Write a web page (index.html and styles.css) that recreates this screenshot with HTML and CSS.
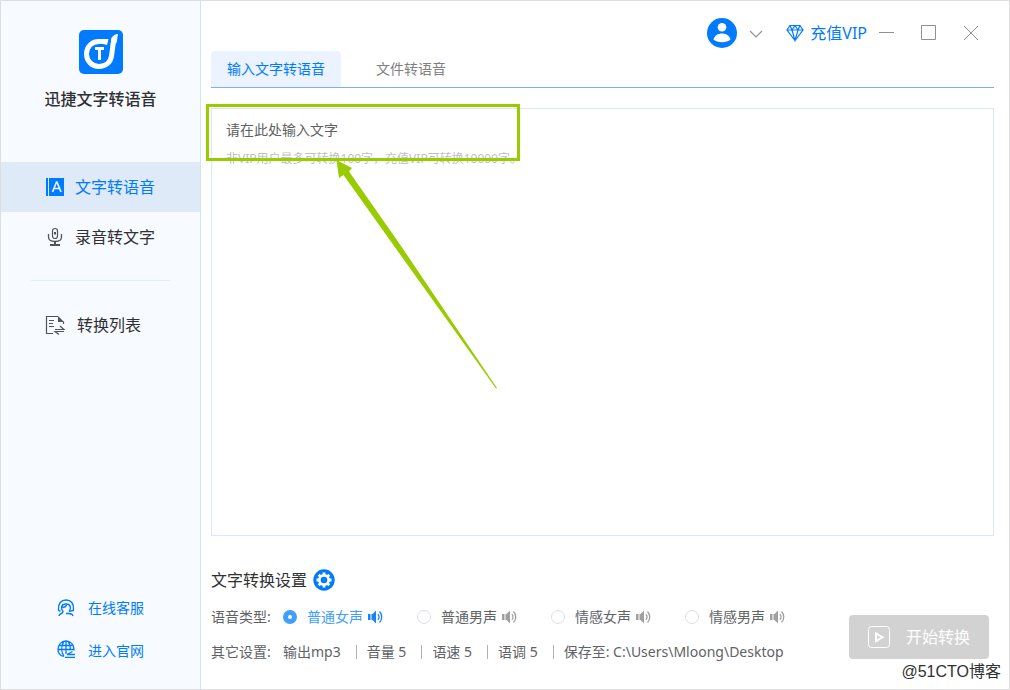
FILE: index.html
```html
<!DOCTYPE html>
<html lang="zh-CN">
<head>
<meta charset="utf-8">
<meta name="viewport" content="width=device-width, initial-scale=1">
<title>迅捷文字转语音</title>
<link rel="stylesheet" href="styles.css">
</head>
<body>
<svg class="symbols" aria-hidden="true">
  <symbol id="speaker" viewBox="0 0 15 14">
    <path d="M0 4h2.500v6H0zM3.500 4h1L8 .5v13L4.500 10h-1z" fill="currentColor"/>
    <path d="M9.800 4.200c1.700 1.600 1.700 4 0 5.600M11.500 1.500c3 3 3 8 0 11" fill="none" stroke="currentColor" stroke-width="1.300"/>
  </symbol>
</svg>
<div class="app">
  <aside class="sidebar">
    <div class="brand">
      <svg class="logo" viewBox="0 0 44 44" aria-hidden="true">
        <rect width="44" height="44" rx="5" fill="#007aff"/>
        <path d="M28 11.500H20C12.500 11.500 7.500 17 7.500 24c0 7 5.500 12.500 12.500 12.500 6.500 0 11.500-4 12.500-10.500L35 8" fill="none" stroke="#fff" stroke-width="5"/>
        <path d="M32.200 10.500Q32.500 4.500 39 4L37.500 13 31.500 16zM29.500 9l-1.500 6-4-1V9z" fill="#fff"/>
        <path d="M16 17h9v3h-3v10h-3V20h-3z" fill="#fff"/>
      </svg>
      <h1>迅捷文字转语音</h1>
    </div>
    <nav class="nav">
      <a class="nav-item active" href="#speech">
        <svg width="20" height="20" viewBox="0 0 20 20" aria-hidden="true"><path d="M1 1h2v18H1zM4 1h15v18H4z" fill="#007aff"/><path d="M7.500 15l4-10h.5l4 10M9 11.500h5.500" fill="none" stroke="#e6f1ff" stroke-width="1.700"/></svg>
        <span>文字转语音</span>
      </a>
      <a class="nav-item" href="#record">
        <svg width="20" height="20" viewBox="0 0 20 20" fill="none" stroke="#505357" aria-hidden="true"><rect x="7.500" y="1.500" width="5" height="10" rx="2.500" stroke-width="1.200"/><path d="M3.500 7v3c0 3 2.500 4.500 6.500 4.500s6.500-1.500 6.500-4.500V7" stroke-width="1.300"/><path d="M10 5v2.500M10 14.500V18M5 18h10" stroke-width="2"/></svg>
        <span>录音转文字</span>
      </a>
      <hr>
      <a class="nav-item list" href="#list">
        <svg width="20" height="20" viewBox="0 0 20 20" fill="none" stroke="#505357" stroke-width="1.200" aria-hidden="true"><path d="M8 18.500H1.500v-17H13M18.500 6.500V9M4 5.500h5M4 8.500h4M4 11.500h5M10 14.500h9l-4-3.500M19 16.500h-9l4 3"/><path d="M13 1l6 6h-6z" fill="#505357" stroke="none"/></svg>
        <span>转换列表</span>
      </a>
    </nav>
    <div class="links">
      <a href="#service">
        <svg width="18" height="18" viewBox="0 0 18 18" fill="none" stroke="#007aff" stroke-width="1.400" aria-hidden="true"><path d="M1.500 10.500C1 4.500 4 1 9 1s8 3.500 7.500 9.500c0 1-1 1.500-2.500 1.500h-2M1.500 10.500c0 1 .5 1.500 2 1.500"/><path d="M6 12.500C3.500 10 4 5 9 5s5.500 5 3 7.500M5.500 8.500c2 0 3.500-1 4-2.500M6 12c0 2-1 2.500-2.500 3-1 .5-1.500 1-1.500 2M9 14.500h2.500c3 0 4 .5 4.500 2.500"/></svg>
        <span>在线客服</span>
      </a>
      <a class="website" href="#website">
        <svg width="18" height="18" viewBox="0 0 18 18" fill="none" stroke="#007aff" stroke-width="1.300" aria-hidden="true"><path d="M6.500 16.500C3 15.500 1 13 1 9.500 1 4.500 4.500 1 9 1s8 3.500 8 8.500v1M1 9.500h16M2.500 5.500h13M9 1v13M7 1.500c-3 4-3 10 0 15M11 1.500c2 2.500 2.500 6 2 9M18 17.300H8M18 14.500h-8l5.500-3"/></svg>
        <span>进入官网</span>
      </a>
    </div>
  </aside>
  <main class="main">
    <header class="topbar">
      <button class="account" aria-label="账户">
        <svg width="30" height="30" viewBox="0 0 30 30" aria-hidden="true"><circle cx="15" cy="15" r="15" fill="#007aff"/><circle cx="15" cy="9.300" r="4.300" fill="#fff"/><path d="M6.500 21.500c1-4 4.500-6 8.500-6s7.500 2 8.500 6c-2 2-5 2.700-8.500 2.700s-6.500-.7-8.500-2.700z" fill="#fff"/></svg>
        <svg width="14" height="14" viewBox="0 0 14 14" fill="none" stroke="#909399" stroke-width="1.200" aria-hidden="true"><path d="M1 5l6 6 6-6"/></svg>
      </button>
      <a class="vip" href="#vip">
        <svg width="18" height="18" viewBox="0 0 18 18" fill="none" stroke="#007aff" stroke-width="1.200" aria-hidden="true"><path d="M4 1.500h10L17 6l-8 10.500L1 6zM1 6h16M4 1.500L6 6l3 10.500L12 6l2-4.500M6 6l3-4.500L12 6"/></svg>
        <span>充值VIP</span>
      </a>
      <div class="window-controls">
        <button aria-label="最小化"><svg width="16" height="16" viewBox="0 0 16 16" aria-hidden="true"><path d="M0 7.500h15"/></svg></button>
        <button aria-label="最大化"><svg width="16" height="16" viewBox="0 0 16 16" aria-hidden="true"><path d="M.5.500h14v14H.5z"/></svg></button>
        <button aria-label="关闭"><svg width="16" height="16" viewBox="0 0 16 16" aria-hidden="true"><path d="M1 1l14 14M15 1L1 15"/></svg></button>
      </div>
    </header>
    <div class="tabs" role="tablist">
      <button class="tab selected" role="tab" aria-selected="true">输入文字转语音</button>
      <button class="tab" role="tab" aria-selected="false">文件转语音</button>
    </div>
    <section class="editor">
      <textarea id="source"></textarea>
      <label class="hint" for="source">
        <span class="hint-title">请在此处输入文字</span>
        <span class="hint-note">非VIP用户最多可转换100字，充值VIP可转换10000字。</span>
      </label>
      <svg class="callout" width="314" height="290" viewBox="0 0 314 290" aria-hidden="true">
        <rect x="1.500" y="1.500" width="311" height="54" fill="none" stroke="#99cc00" stroke-width="3"/>
        <path d="M130.500 56L146 64l-3 3.500L194 140.500 291 284l-1 .5L187 140.500 137.500 71l-4.500 3z" fill="#99cc00"/>
      </svg>
    </section>
    <section class="settings">
      <div class="options">
        <h2>文字转换设置
          <svg width="22" height="22" viewBox="0 0 22 22" aria-hidden="true"><circle cx="11" cy="11" r="10.700" fill="#007aff"/><circle cx="11" cy="11" r="4.600" fill="none" stroke="#fff" stroke-width="2.600"/><path d="M11 3.500v15M3.500 11h15M5.700 5.700l10.600 10.600M16.300 5.700L5.700 16.300" stroke="#fff" stroke-width="2.800"/><circle cx="11" cy="11" r="3.300" fill="#007aff"/></svg>
        </h2>
        <div class="row" role="radiogroup" aria-label="语音类型">
          <span class="row-label">语音类型:</span>
          <div class="voice"><label><input type="radio" name="voice" checked><span>普通女声</span></label><button aria-label="试听普通女声"><svg width="15" height="14"><use href="#speaker"/></svg></button></div>
          <div class="voice"><label><input type="radio" name="voice"><span>普通男声</span></label><button aria-label="试听普通男声"><svg width="15" height="14"><use href="#speaker"/></svg></button></div>
          <div class="voice"><label><input type="radio" name="voice"><span>情感女声</span></label><button aria-label="试听情感女声"><svg width="15" height="14"><use href="#speaker"/></svg></button></div>
          <div class="voice"><label><input type="radio" name="voice"><span>情感男声</span></label><button aria-label="试听情感男声"><svg width="15" height="14"><use href="#speaker"/></svg></button></div>
        </div>
        <div class="row">
          <span class="row-label">其它设置:</span>
          <ul class="facts">
            <li>输出mp3</li>
            <li>音量 5</li>
            <li>语速 5</li>
            <li>语调 5</li>
            <li>保存至: C:\Users\Mloong\Desktop</li>
          </ul>
        </div>
      </div>
      <button class="start" disabled>
        <svg width="22" height="22" viewBox="0 0 22 22" fill="none" stroke="#fff" aria-hidden="true"><rect x=".5" y=".5" width="21" height="21" rx="3"/><path d="M8 7.500v7.500l6.500-3.750z" stroke-width="2"/></svg>
        <span>开始转换</span>
      </button>
    </section>
  </main>
  <div class="watermark">@51CTO博客</div>
</div>
</body>
</html>
```
FILE: styles.css
```css
* { box-sizing: border-box; }
body {
  margin: 0;
  font: 14px/20px "Noto Sans", "Noto Sans CJK SC", sans-serif;
  color: #606266;
}
h1, h2, ul { margin: 0; padding: 0; font-weight: 400; }
a { color: inherit; text-decoration: none; }
button { padding: 0; border: 0; background: none; color: inherit; font: inherit; }
svg { display: block; flex: none; }
.symbols { position: absolute; width: 0; height: 0; }

.app {
  position: relative;
  display: flex;
  min-height: 100vh;
  border: 1px solid #dedede;
  background: #fff;
}

.sidebar {
  display: flex;
  flex-direction: column;
  flex: none;
  width: 200px;
  border-right: 1px solid #cfe4fa;
  background: #f7faff;
}
.brand {
  display: flex;
  flex-direction: column;
  align-items: center;
  gap: 13px;
  height: 161px;
  padding-top: 29px;
}
.logo { width: 44px; height: 44px; }
.brand h1 { font-size: 16px; line-height: 24px; font-weight: 500; color: #303133; }
.nav-item {
  display: flex;
  align-items: center;
  gap: 10px;
  height: 50px;
  padding-left: 44px;
  font-size: 16px;
  color: #303133;
}
.nav-item.active { background: #deeaf8; color: #007aff; }
.nav-item.list { gap: 12px; }
.nav hr { height: 1px; margin: 18px 30px 19px; border: 0; background: #e0effd; }
.links {
  display: flex;
  flex-direction: column;
  gap: 23px;
  margin-top: auto;
  padding: 0 0 28px 56px;
  color: #007aff;
}
.links a { display: flex; align-items: center; gap: 13px; }
.links .website { align-items: flex-start; }
.website svg { margin-top: -1px; }

.main {
  display: flex;
  flex-direction: column;
  flex: 1;
  min-width: 0;
  padding: 0 15px 20px 10px;
}
.topbar {
  display: flex;
  align-items: center;
  justify-content: flex-end;
  height: 50px;
  padding: 14px 15px 0 0;
}
.account { display: flex; align-items: center; gap: 12px; margin-right: 23px; }
.vip { display: flex; align-items: center; gap: 6px; margin-right: 12px; font-size: 16px; color: #007aff; }
.window-controls { display: flex; gap: 26px; }
.window-controls svg { fill: none; stroke: #909090; }

.tabs { display: flex; gap: 20px; border-bottom: 1px solid #80b0e8; }
.tab { height: 36px; padding: 0 15px; color: #808080; }
.tab.selected { width: 130px; border-radius: 4px 4px 0 0; background: #eaf3ff; color: #007aff; }

.editor { position: relative; display: flex; flex: 1; margin-top: 20px; }
.editor textarea {
  flex: 1;
  min-width: 0;
  padding: 11px 14px;
  border: 1px solid #dbe8f7;
  background: #fff;
  font: inherit;
  resize: none;
  outline: 0;
}
.hint { position: absolute; top: 12px; left: 15px; display: grid; gap: 9px; }
.hint-title { color: #606060; }
.hint-note { font-size: 12px; color: #c0c0c0; }
.callout { position: absolute; top: -4px; left: -5px; pointer-events: none; }

.settings {
  display: flex;
  align-items: flex-end;
  justify-content: space-between;
  padding: 33px 5px 7px 0;
}
.options { display: grid; gap: 15px; }
.options h2 { display: flex; align-items: center; gap: 6px; margin-bottom: 1px; font-size: 16px; line-height: 22px; color: #303133; }
.row { display: flex; }
.row-label { width: 72px; }
.voice { display: flex; align-items: center; gap: 5px; width: 134px; }
.voice label { display: flex; align-items: center; gap: 10px; }
.voice input {
  appearance: none;
  width: 14px;
  height: 14px;
  margin: 0;
  border: 1px solid #dcdfe6;
  border-radius: 50%;
  background: #fff;
}
.voice input:checked { border: 5px solid #409eff; }
.voice input:checked + span { color: #409eff; }
.voice button { color: #a0a0a0; }
.voice:has(:checked) button { color: #1684fb; }
.facts { display: flex; list-style: none; white-space: nowrap; }
.facts li { display: flex; align-items: center; }
.facts li + li::before { content: ""; width: 1px; height: 14px; margin: 0 10px 0 15px; background: #b0b0b0; }
.start {
  display: flex;
  align-items: center;
  justify-content: center;
  gap: 16px;
  width: 140px;
  height: 44px;
  margin-bottom: 3px;
  border-radius: 4px;
  background: #d2d2d2;
  font-size: 16px;
  color: #fff;
}
.watermark {
  position: absolute;
  right: 8px;
  bottom: 5px;
  font: 16px/24px "Liberation Sans", "Noto Sans CJK SC", sans-serif;
  color: #303030;
  text-shadow: 1px 1px 0 #fff;
}
```
